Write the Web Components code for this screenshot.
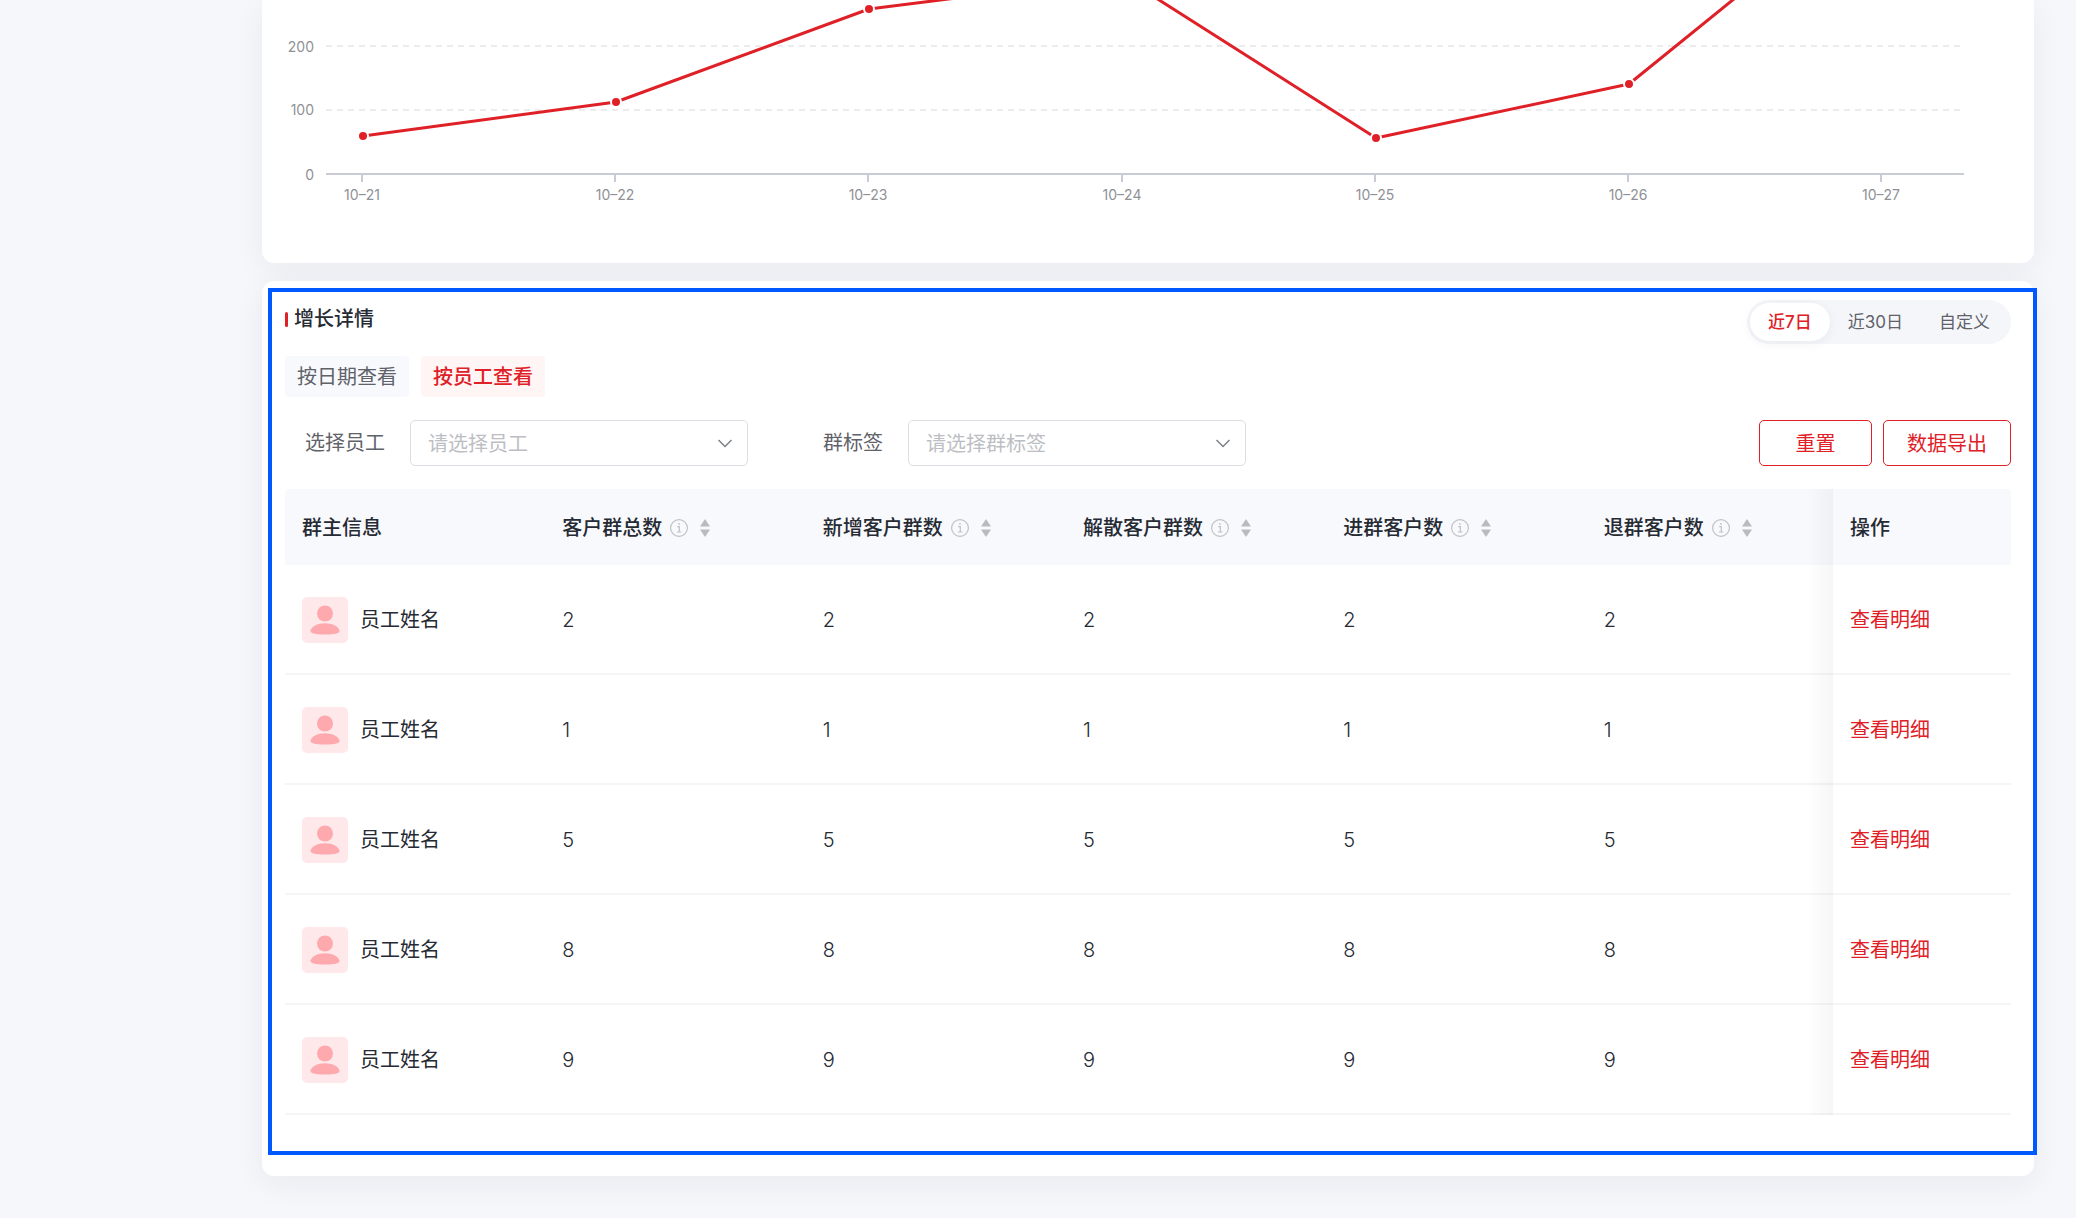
<!DOCTYPE html>
<html lang="zh-CN">
<head>
<meta charset="UTF-8">
<meta name="viewport" content="width=device-width, initial-scale=1">
<title>客户群增长</title>
<style>
  body {
    --red: #df2027;
    --ink: #262a33;
    --muted: #5f6269;
    margin: 0;
    background: #f5f7fb;
    color: var(--ink);
    font: 20px/28px Inter, "Noto Sans CJK SC", sans-serif;
  }
  main {
    display: flex;
    flex-direction: column;
    gap: 18px;
    padding: 0 42px 42px 262px;
  }
</style>
</head>
<body>
<main>
  <page-card flush>
    <trend-chart></trend-chart>
  </page-card>
  <page-card highlighted>
    <card-header heading="增长详情">
      <segmented-control options="近7日,近30日,自定义"></segmented-control>
    </card-header>
    <view-tabs options="按日期查看,按员工查看" active="1"></view-tabs>
    <filter-bar>
      <filter-select label="选择员工" placeholder="请选择员工"></filter-select>
      <filter-select label="群标签" placeholder="请选择群标签"></filter-select>
      <outline-button slot="actions">重置</outline-button>
      <outline-button slot="actions">数据导出</outline-button>
    </filter-bar>
    <detail-table></detail-table>
  </page-card>
</main>

<script>
class PageCard extends HTMLElement {
  constructor() {
    super();
    this.attachShadow({ mode: 'open' }).innerHTML = `
      <style>
        :host {
          display: block;
          position: relative;
          padding: 19px 23px 61px;
          background: #fff;
          border-radius: 12px;
          box-shadow: 0 8px 32px rgba(30, 35, 50, 0.06);
        }
        :host([flush]) { padding: 0; border-radius: 0 0 12px 12px; }
        .frame { display: none; }
        :host([highlighted]) .frame {
          display: block;
          position: absolute;
          inset: 7px -3px 21px 6px;
          border: 4px solid #0058ff;
          pointer-events: none;
          z-index: 3;
        }
      </style>
      <slot></slot>
      <div class="frame"></div>
    `;
  }
}

class TrendChart extends HTMLElement {
  constructor() {
    super();
    this.attachShadow({ mode: 'open' });

    this.days = ['10–21', '10–22', '10–23', '10–24', '10–25', '10–26', '10–27'];
    this.heights = [136, 102, 9, -23, 138, 84, -121];
    this.render();
  }

  x(i) {
    return Math.round(100 + i * 253.2);
  }

  render() {
    const points = this.heights.map((y, i) => `${this.x(i) + 1},${y}`).join(' ');
    const dots = this.heights.map((y, i) =>
      `<circle class="dot" cx="${this.x(i) + 1}" cy="${y}" r="5"/>`
    ).join('');
    const ticks = this.days.map((day, i) => `
      <path class="axis" d="M${this.x(i)} 174v8"/>
      <text x="${this.x(i)}" y="200" text-anchor="middle">${day}</text>
    `).join('');

    this.shadowRoot.innerHTML = `
      <style>
        :host { display: block; }
        svg { display: block; width: 100%; }
        text { font-size: 14px; fill: #8f9196; }
        .grid { stroke: #ececee; stroke-width: 2; stroke-dasharray: 6 5; }
        .axis { fill: none; stroke: #c9ccd5; stroke-width: 2; }
        .line { fill: none; stroke: var(--red); stroke-width: 3; stroke-linejoin: round; }
        .dot { fill: var(--red); stroke: #fff; stroke-width: 2; }
      </style>
      <svg viewBox="0 0 1772 263" role="img" aria-label="增长趋势">
        <path class="grid" d="M64 46H1702"/>
        <path class="grid" d="M64 110H1702"/>
        <path class="axis" d="M64 174H1702"/>
        <text x="52" y="52" text-anchor="end">200</text>
        <text x="52" y="115" text-anchor="end">100</text>
        <text x="52" y="180" text-anchor="end">0</text>
        ${ticks}
        <polyline class="line" points="${points}"/>
        ${dots}
      </svg>
    `;
  }
}

class CardHeader extends HTMLElement {
  constructor() {
    super();
    this.attachShadow({ mode: 'open' });
  }

  connectedCallback() {
    this.shadowRoot.innerHTML = `
      <style>
        :host { display: flex; justify-content: space-between; align-items: flex-start; }
        h2 {
          display: flex;
          align-items: center;
          gap: 6px;
          margin: 0;
          font-size: 20px;
          line-height: 38px;
          font-weight: 500;
        }
        h2::before {
          content: "";
          width: 3px;
          height: 15px;
          border-radius: 2px;
          background: var(--red);
        }
      </style>
      <h2>${this.getAttribute('heading')}</h2>
      <slot></slot>
    `;
  }
}

class SegmentedControl extends HTMLElement {
  constructor() {
    super();
    this.attachShadow({ mode: 'open' });
    this.active = 0;
  }

  connectedCallback() {
    this.render();
  }

  render() {
    const options = this.getAttribute('options').split(',');
    this.shadowRoot.innerHTML = `
      <style>
        :host {
          display: flex;
          box-sizing: border-box;
          height: 44px;
          padding: 3px;
          border-radius: 22px;
          background: #f5f6fa;
        }
        button {
          padding: 0 18px;
          border: 0;
          border-radius: 19px;
          background: none;
          color: var(--muted);
          font: inherit;
          font-size: 17px;
          cursor: pointer;
        }
        button[aria-pressed="true"] {
          background: #fff;
          color: var(--red);
          font-weight: 500;
          box-shadow: 0 2px 12px rgba(30, 35, 50, 0.06);
        }
      </style>
      ${options.map((text, i) =>
        `<button type="button" aria-pressed="${i === this.active}">${text}</button>`
      ).join('')}
    `;
    this.shadowRoot.querySelectorAll('button').forEach((button, i) => {
      button.addEventListener('click', () => {
        this.active = i;
        this.render();
      });
    });
  }
}

class ViewTabs extends HTMLElement {
  constructor() {
    super();
    this.attachShadow({ mode: 'open' });
  }

  connectedCallback() {
    this.active = Number(this.getAttribute('active')) || 0;
    this.render();
  }

  render() {
    const options = this.getAttribute('options').split(',');
    this.shadowRoot.innerHTML = `
      <style>
        :host { display: flex; gap: 12px; margin-top: 12px; }
        button {
          height: 41px;
          padding: 0 12px;
          border: 0;
          border-radius: 4px;
          background: #f8f9fd;
          color: var(--muted);
          font: inherit;
          cursor: pointer;
        }
        button[aria-selected="true"] {
          background: #fff5f5;
          color: var(--red);
          font-weight: 500;
        }
      </style>
      ${options.map((text, i) =>
        `<button type="button" role="tab" aria-selected="${i === this.active}">${text}</button>`
      ).join('')}
    `;
    this.shadowRoot.querySelectorAll('button').forEach((button, i) => {
      button.addEventListener('click', () => {
        this.active = i;
        this.render();
      });
    });
  }
}

class FilterBar extends HTMLElement {
  constructor() {
    super();
    this.attachShadow({ mode: 'open' }).innerHTML = `
      <style>
        :host {
          display: flex;
          justify-content: space-between;
          gap: 24px;
          margin: 23px 0;
          padding-left: 20px;
        }
        .filters { display: flex; gap: 75px; }
        .actions { display: flex; gap: 11px; }
      </style>
      <div class="filters"><slot></slot></div>
      <div class="actions"><slot name="actions"></slot></div>
    `;
  }
}

class FilterSelect extends HTMLElement {
  constructor() {
    super();
    this.attachShadow({ mode: 'open' });
  }

  connectedCallback() {
    this.shadowRoot.innerHTML = `
      <style>
        :host { display: flex; align-items: center; gap: 25px; }
        label { color: var(--muted); }
        .box { position: relative; display: flex; }
        select {
          appearance: none;
          width: 338px;
          height: 46px;
          padding: 1px 48px 0 17px;
          border: 1px solid #dcdee3;
          border-radius: 5px;
          background: #fff;
          color: #bcbec3;
          font: inherit;
        }
        svg {
          position: absolute;
          top: 17px;
          right: 15px;
          fill: none;
          stroke: #7d8086;
          pointer-events: none;
        }
      </style>
      <label for="field">${this.getAttribute('label')}</label>
      <div class="box">
        <select id="field">
          <option>${this.getAttribute('placeholder')}</option>
        </select>
        <svg width="16" height="14" viewBox="0 0 16 14"><path d="M1.5 3 8 9.500l6.500-6.500" stroke-width="1.500"/></svg>
      </div>
    `;
  }
}

class OutlineButton extends HTMLElement {
  constructor() {
    super();
    this.attachShadow({ mode: 'open' }).innerHTML = `
      <style>
        :host { display: block; }
        button {
          min-width: 113px;
          height: 46px;
          padding: 1px 23px 0;
          border: 1px solid var(--red);
          border-radius: 5px;
          background: #fff;
          color: var(--red);
          font: inherit;
          cursor: pointer;
        }
      </style>
      <button type="button"><slot></slot></button>
    `;
  }
}

class UserAvatar extends HTMLElement {
  constructor() {
    super();
    this.attachShadow({ mode: 'open' }).innerHTML = `
      <style>
        :host { display: block; width: 46px; height: 46px; }
        svg { display: block; }
      </style>
      <svg width="46" height="46" viewBox="0 0 46 46">
        <rect width="46" height="46" rx="5" fill="#ffe8ea"/>
        <g fill="#fda9ae">
          <circle cx="23" cy="16.500" r="8"/>
          <path d="M8.500 33.500C10 29 16 26.200 23 26.200s13 2.800 14.500 7.300c.4 2.600-4 4-14.500 4s-14.900-1.400-14.500-4z"/>
        </g>
      </svg>
    `;
  }
}

class ColumnHeading extends HTMLElement {
  constructor() {
    super();
    this.attachShadow({ mode: 'open' }).innerHTML = `
      <style>
        :host { display: flex; align-items: center; }
        svg { display: block; }
        .info { margin-left: 8px; fill: none; stroke: #bfc1c6; }
        button { margin-left: 12px; padding: 0; border: 0; background: none; cursor: pointer; }
        button svg { fill: #b9bbc0; }
      </style>
      <slot></slot>
      <svg class="info" width="18" height="18" viewBox="0 0 18 18">
        <circle cx="9" cy="9" r="8.400" stroke-width="1.200"/>
        <path d="M7.200 7.600H9.300V13M7 13h4.400" stroke-width="1.200"/>
        <circle cx="9" cy="4.900" r=".9" fill="#bfc1c6" stroke="none"/>
      </svg>
      <button type="button" aria-label="排序">
        <svg width="10" height="18" viewBox="0 0 10 18"><path d="M5 0l5 7.500H0zM5 18l5-7.500H0z"/></svg>
      </button>
    `;
  }
}

class DetailTable extends HTMLElement {
  constructor() {
    super();
    this.attachShadow({ mode: 'open' });

    this.columns = ['客户群总数', '新增客户群数', '解散客户群数', '进群客户数', '退群客户数'];
    this.rows = [2, 1, 5, 8, 9].map(count => ({
      name: '员工姓名',
      values: this.columns.map(() => count)
    }));
    this.render();
  }

  render() {
    const headings = this.columns.map(name =>
      `<th scope="col"><column-heading>${name}</column-heading></th>`
    ).join('');
    const rows = this.rows.map(row => `
      <tr>
        <td><div class="owner"><user-avatar></user-avatar>${row.name}</div></td>
        ${row.values.map(value => `<td class="count">${value}</td>`).join('')}
        <td class="pinned"><a href="#detail">查看明细</a></td>
      </tr>
    `).join('');

    this.shadowRoot.innerHTML = `
      <style>
        :host {
          display: block;
          overflow-x: auto;
          scrollbar-width: none;
          border-radius: 5px 5px 0 0;
        }
        /* a little wider than the card, so the pinned column overlaps the last one */
        table {
          width: calc(100% + 14px);
          table-layout: fixed;
          border-collapse: separate;
          border-spacing: 0;
        }
        th, td {
          box-sizing: border-box;
          padding: 2px 0 0 17px;
          text-align: left;
          background: #fff;
        }
        th { height: 76px; font-weight: 500; background: #f8f9fd; }
        td { height: 110px; border-bottom: 2px solid #f5f5f6; }
        .count { font-weight: 300; }
        .owner { display: flex; align-items: center; gap: 12px; }
        .pinned { position: sticky; right: 0; width: 178px; }
        .pinned::before {
          content: "";
          position: absolute;
          top: 0;
          bottom: 0;
          right: 100%;
          width: 26px;
          background: linear-gradient(to left, rgba(0, 0, 0, 0.035), rgba(0, 0, 0, 0));
        }
        td.pinned::before { bottom: -2px; }
        a { color: var(--red); text-decoration: none; }
      </style>
      <table>
        <thead>
          <tr>
            <th scope="col">群主信息</th>
            ${headings}
            <th scope="col" class="pinned">操作</th>
          </tr>
        </thead>
        <tbody>${rows}</tbody>
      </table>
    `;
  }
}

customElements.define('page-card', PageCard);
customElements.define('trend-chart', TrendChart);
customElements.define('card-header', CardHeader);
customElements.define('segmented-control', SegmentedControl);
customElements.define('view-tabs', ViewTabs);
customElements.define('filter-bar', FilterBar);
customElements.define('filter-select', FilterSelect);
customElements.define('outline-button', OutlineButton);
customElements.define('user-avatar', UserAvatar);
customElements.define('column-heading', ColumnHeading);
customElements.define('detail-table', DetailTable);
</script>
</body>
</html>
